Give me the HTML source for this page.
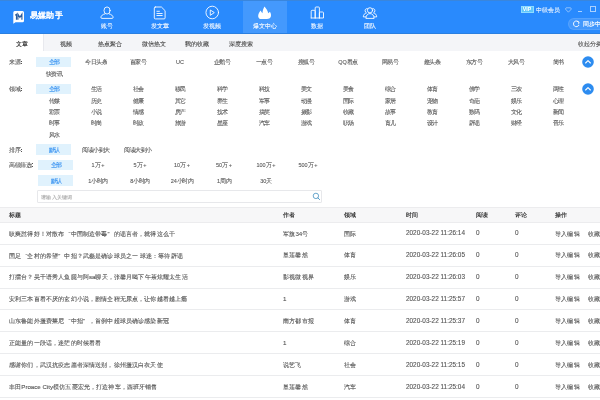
<!DOCTYPE html><html><head><meta charset="utf-8"><style>
html,body{margin:0;padding:0;width:600px;height:400px;overflow:hidden;background:#fff;font-family:"Liberation Sans",sans-serif;}
.t{position:absolute;white-space:nowrap;transform-origin:0 0;-webkit-text-stroke:0.45px currentColor;-webkit-font-smoothing:antialiased;}
.b{position:absolute;}
.ql{display:inline-block;width:1em;text-align:right}
.qr{display:inline-block;width:1em;text-align:left}
</style></head><body>
<div class="b" style="left:0;top:0;width:600px;height:34px;background:#298afd"></div>
<div class="b" style="left:243px;top:0;width:44px;height:34px;background:rgba(255,255,255,0.13)"></div>
<div class="b" style="left:0;top:0;width:600px;height:1px;background:#3a86dc"></div>
<div class="b" style="left:0;top:33px;width:600px;height:1px;background:#2a7fe0"></div>
<svg class="b" style="left:12px;top:10px" width="14" height="15" viewBox="0 0 14 15">
<path d="M2.7 1 H10.5 Q12 1 12 2.5 V10.7 Q12 12.2 10.5 12.2 H3.5 L1.3 13.8 V2.5 Q1.3 1 2.7 1 Z" fill="#fff"/>
<path d="M3.2 5.3 L4.5 4.3 V9.7 M5.9 9.7 V4.3 L7.9 7.4 L9.9 4.3 V9.7" stroke="#2b5d9e" stroke-width="1.15" fill="none" stroke-linejoin="miter"/>
</svg>
<div class="t" style="left:29.50px;top:9.44px;font-size:33px;line-height:52.80px;color:#fff;font-weight:bold;transform:scale(0.24848);-webkit-text-stroke:0;-webkit-text-stroke:0.4px #fff;">易媒助手</div>
<div class="t" style="left:87.00px;top:20.50px;width:160.0px;text-align:center;font-size:24px;line-height:38.40px;color:#fff;font-weight:normal;transform:scale(0.25000);-webkit-text-stroke:0.3px #fff;">账号</div>
<div class="t" style="left:139.50px;top:20.50px;width:160.0px;text-align:center;font-size:24px;line-height:38.40px;color:#fff;font-weight:normal;transform:scale(0.25000);-webkit-text-stroke:0.3px #fff;">发文章</div>
<div class="t" style="left:192.30px;top:20.50px;width:160.0px;text-align:center;font-size:24px;line-height:38.40px;color:#fff;font-weight:normal;transform:scale(0.25000);-webkit-text-stroke:0.3px #fff;">发视频</div>
<div class="t" style="left:244.80px;top:20.50px;width:160.0px;text-align:center;font-size:24px;line-height:38.40px;color:#fff;font-weight:normal;transform:scale(0.25000);-webkit-text-stroke:0.3px #fff;">爆文中心</div>
<div class="t" style="left:297.30px;top:20.50px;width:160.0px;text-align:center;font-size:24px;line-height:38.40px;color:#fff;font-weight:normal;transform:scale(0.25000);-webkit-text-stroke:0.3px #fff;">数据</div>
<div class="t" style="left:349.80px;top:20.50px;width:160.0px;text-align:center;font-size:24px;line-height:38.40px;color:#fff;font-weight:normal;transform:scale(0.25000);-webkit-text-stroke:0.3px #fff;">团队</div>
<svg class="b" style="left:98px;top:4px" width="20" height="18" viewBox="0 0 20 18">
<ellipse cx="9.05" cy="6.5" rx="3.05" ry="3.55" stroke="rgba(255,255,255,0.88)" stroke-width="1.0" fill="none" stroke-linecap="round" stroke-linejoin="round"/>
<path d="M6.9 9.9 C4.8 10.3 2.9 11.8 2.9 13.3 Q2.9 14.4 4 14.4 H14 Q15.1 14.4 15.1 13.3 C15.1 11.8 13.2 10.3 11.2 9.9" stroke="rgba(255,255,255,0.88)" stroke-width="1.0" fill="none" stroke-linecap="round" stroke-linejoin="round"/>
</svg>
<svg class="b" style="left:150px;top:4px" width="20" height="18" viewBox="0 0 20 18">
<path d="M5.3 3.0 H11.4 L15.1 6.7 V13.9 Q15.1 14.9 14.1 14.9 H5.3 Q4.3 14.9 4.3 13.9 V4 Q4.3 3 5.3 3 Z" stroke="rgba(255,255,255,0.88)" stroke-width="1.0" fill="none" stroke-linecap="round" stroke-linejoin="round"/>
<path d="M6.9 7.3 H9.4 M6.9 9.5 H12.2 M6.9 11.5 H12.2" stroke="rgba(255,255,255,0.88)" stroke-width="1.0" fill="none" stroke-linecap="round" stroke-linejoin="round"/>
</svg>
<svg class="b" style="left:202px;top:3px" width="20" height="20" viewBox="0 0 20 20">
<circle cx="10.25" cy="9.5" r="6.3" stroke="rgba(255,255,255,0.88)" stroke-width="1.0" fill="none" stroke-linecap="round" stroke-linejoin="round"/>
<path d="M8.6 7.2 L12.3 9.6 L8.6 12.1 Z" stroke="rgba(255,255,255,0.88)" stroke-width="1.0" fill="none" stroke-linecap="round" stroke-linejoin="round"/>
</svg>
<svg class="b" style="left:254px;top:3px" width="20" height="20" viewBox="0 0 20 20">
<path d="M10.5 3.6 C12 5.5 13.8 7.6 14.2 10.2 C14.8 9.6 15.4 9.2 15.9 8.8 C17 10.5 17.3 12.4 16.8 13.8 C16.2 15.5 14.8 16 13 16 H7.5 C5.5 16 4.4 15 4.2 13.4 C4 11.6 5 9.2 6.6 7.4 C7 8.6 7.8 9.6 8.5 10.2 C8.6 7.8 9.4 5.4 10.5 3.6 Z" fill="#fff"/>
</svg>
<svg class="b" style="left:307px;top:3px" width="20" height="20" viewBox="0 0 20 20">
<path d="M4.2 15 V8.2 Q4.2 7.3 5.1 7.3 H7.3 Q8.2 7.3 8.2 8.2 V15 M8.2 15 V4.9 Q8.2 4 9.1 4 H11.5 Q12.4 4 12.4 4.9 V15 M12.4 15 V9.9 Q12.4 9 13.3 9 H15.6 Q16.5 9 16.5 9.9 V15 H4.2" stroke="rgba(255,255,255,0.88)" stroke-width="1.0" fill="none" stroke-linecap="round" stroke-linejoin="round"/>
</svg>
<svg class="b" style="left:360px;top:3px" width="20" height="20" viewBox="0 0 20 20">
<circle cx="10" cy="7.3" r="2.6" stroke="rgba(255,255,255,0.88)" stroke-width="1.0" fill="none" stroke-linecap="round" stroke-linejoin="round"/>
<path d="M5.9 15 C5.9 12.3 7.8 10.6 10 10.6 C12.2 10.6 14.1 12.3 14.1 15 Z" stroke="rgba(255,255,255,0.88)" stroke-width="1.0" fill="none" stroke-linecap="round" stroke-linejoin="round"/>
<path d="M7.3 5.6 C6.1 5.4 5.1 6.3 5.1 7.7 C5.1 8.8 5.7 9.6 6.5 9.9 C4.6 10.4 3.3 11.8 3.3 13.9 H5.9" stroke="rgba(255,255,255,0.88)" stroke-width="1.0" fill="none" stroke-linecap="round" stroke-linejoin="round"/>
<path d="M12.7 5.6 C13.9 5.4 14.9 6.3 14.9 7.7 C14.9 8.8 14.3 9.6 13.5 9.9 C15.4 10.4 16.7 11.8 16.7 13.9 H14.1" stroke="rgba(255,255,255,0.88)" stroke-width="1.0" fill="none" stroke-linecap="round" stroke-linejoin="round"/>
</svg>
<div class="b" style="left:520.6px;top:5.8px;width:13.6px;height:6.9px;background:#5ec6fc;box-sizing:border-box;border:0.5px solid #8fdcff"></div>
<div class="t" style="left:520.40px;top:5.14px;width:56.5px;text-align:center;font-size:21px;line-height:33.60px;color:#fff;font-weight:bold;transform:scale(0.24762);-webkit-text-stroke:0;">VIP</div>
<div class="t" style="left:536.00px;top:4.80px;font-size:24px;line-height:38.40px;color:rgba(255,255,255,0.92);font-weight:normal;transform:scale(0.25000);-webkit-text-stroke:0.3px rgba(255,255,255,0.9);">中级会员</div>
<svg class="b" style="left:565px;top:7px" width="7" height="6" viewBox="0 0 7 6"><path d="M1.2 0.8 H5.6 L6.4 2 L3.4 5.2 L0.4 2 Z" stroke="rgba(255,255,255,0.65)" stroke-width="0.7" fill="none" stroke-linejoin="round"/></svg>
<div class="b" style="left:578px;top:11.2px;width:4px;height:0.7px;background:rgba(255,255,255,0.6)"></div>
<div class="b" style="left:590px;top:6.1px;width:6px;height:5.8px;box-sizing:border-box;border:0.6px solid rgba(255,255,255,0.6)"></div>
<div class="b" style="left:568px;top:18px;width:50px;height:12px;border-radius:6px;background:rgba(255,255,255,0.12);box-sizing:border-box;border:0.6px solid rgba(255,255,255,0.1)"></div>
<svg class="b" style="left:572px;top:20px" width="9" height="8" viewBox="0 0 9 8"><path d="M6.7 2.1 A2.9 2.9 0 1 0 6.9 5.3" stroke="#fff" stroke-width="0.9" fill="none" stroke-linecap="round"/><path d="M5.2 1.3 L7.1 2.2 L6.6 3.9" stroke="#fff" stroke-width="0.8" fill="none" stroke-linecap="round" stroke-linejoin="round"/></svg>
<div class="t" style="left:583.00px;top:19.20px;font-size:24px;line-height:38.40px;color:#fff;font-weight:normal;transform:scale(0.25000);-webkit-text-stroke:0.5px #fff;">同步中...</div>
<div class="t" style="left:536.00px;top:4.80px;font-size:24px;line-height:38.40px;color:#fff;font-weight:normal;transform:scale(0.25000);"></div>
<div class="b" style="left:43px;top:34px;width:557px;height:17.2px;background:#f4f5f8"></div>
<div class="b" style="left:43px;top:34px;width:0.6px;height:17.2px;background:#e8e9ee"></div>
<div class="t" style="left:2.00px;top:38.62px;width:157.4px;text-align:center;font-size:24px;line-height:38.40px;color:#333;font-weight:bold;transform:scale(0.25417);-webkit-text-stroke:0;">文章</div>
<div class="t" style="left:46.00px;top:38.62px;width:157.4px;text-align:center;font-size:24px;line-height:38.40px;color:#484848;font-weight:normal;transform:scale(0.25417);">视频</div>
<div class="t" style="left:89.60px;top:38.62px;width:157.4px;text-align:center;font-size:24px;line-height:38.40px;color:#484848;font-weight:normal;transform:scale(0.25417);">热点聚合</div>
<div class="t" style="left:133.50px;top:38.62px;width:157.4px;text-align:center;font-size:24px;line-height:38.40px;color:#484848;font-weight:normal;transform:scale(0.25417);">微信热文</div>
<div class="t" style="left:177.20px;top:38.62px;width:157.4px;text-align:center;font-size:24px;line-height:38.40px;color:#484848;font-weight:normal;transform:scale(0.25417);">我的收藏</div>
<div class="t" style="left:221.20px;top:38.62px;width:157.4px;text-align:center;font-size:24px;line-height:38.40px;color:#484848;font-weight:normal;transform:scale(0.25417);">深度搜索</div>
<div class="t" style="left:578.00px;top:38.50px;font-size:24px;line-height:38.40px;color:#555;font-weight:normal;transform:scale(0.25000);">收起分类</div>
<div class="t" style="left:8.70px;top:57.90px;font-size:22px;line-height:35.20px;color:#606060;font-weight:normal;transform:scale(0.25000);">来源</div>
<div class="b" style="left:20.6px;top:60.70px;width:0.9px;height:0.9px;background:#555"></div>
<div class="b" style="left:20.6px;top:63.40px;width:0.9px;height:0.9px;background:#555"></div>
<div class="b" style="left:36px;top:57px;width:35.3px;height:10px;background:#e0f2fd"></div>
<div class="t" style="left:34.00px;top:58.10px;width:160.0px;text-align:center;font-size:22px;line-height:35.20px;color:#2d8cf0;font-weight:normal;transform:scale(0.25000);">全部</div>
<div class="t" style="left:76.00px;top:58.10px;width:160.0px;text-align:center;font-size:22px;line-height:35.20px;color:#5c5c5c;font-weight:normal;transform:scale(0.25000);">今日头条</div>
<div class="t" style="left:118.00px;top:58.10px;width:160.0px;text-align:center;font-size:22px;line-height:35.20px;color:#5c5c5c;font-weight:normal;transform:scale(0.25000);">百家号</div>
<div class="t" style="left:160.00px;top:58.10px;width:160.0px;text-align:center;font-size:22px;line-height:35.20px;color:#5c5c5c;font-weight:normal;transform:scale(0.25000);">UC</div>
<div class="t" style="left:202.00px;top:58.10px;width:160.0px;text-align:center;font-size:22px;line-height:35.20px;color:#5c5c5c;font-weight:normal;transform:scale(0.25000);">企鹅号</div>
<div class="t" style="left:244.00px;top:58.10px;width:160.0px;text-align:center;font-size:22px;line-height:35.20px;color:#5c5c5c;font-weight:normal;transform:scale(0.25000);">一点号</div>
<div class="t" style="left:286.00px;top:58.10px;width:160.0px;text-align:center;font-size:22px;line-height:35.20px;color:#5c5c5c;font-weight:normal;transform:scale(0.25000);">搜狐号</div>
<div class="t" style="left:328.00px;top:58.10px;width:160.0px;text-align:center;font-size:22px;line-height:35.20px;color:#5c5c5c;font-weight:normal;transform:scale(0.25000);">QQ看点</div>
<div class="t" style="left:370.00px;top:58.10px;width:160.0px;text-align:center;font-size:22px;line-height:35.20px;color:#5c5c5c;font-weight:normal;transform:scale(0.25000);">网易号</div>
<div class="t" style="left:412.00px;top:58.10px;width:160.0px;text-align:center;font-size:22px;line-height:35.20px;color:#5c5c5c;font-weight:normal;transform:scale(0.25000);">趣头条</div>
<div class="t" style="left:454.00px;top:58.10px;width:160.0px;text-align:center;font-size:22px;line-height:35.20px;color:#5c5c5c;font-weight:normal;transform:scale(0.25000);">东方号</div>
<div class="t" style="left:496.00px;top:58.10px;width:160.0px;text-align:center;font-size:22px;line-height:35.20px;color:#5c5c5c;font-weight:normal;transform:scale(0.25000);">大风号</div>
<div class="t" style="left:538.00px;top:58.10px;width:160.0px;text-align:center;font-size:22px;line-height:35.20px;color:#5c5c5c;font-weight:normal;transform:scale(0.25000);">简书</div>
<div class="t" style="left:34.00px;top:69.50px;width:160.0px;text-align:center;font-size:22px;line-height:35.20px;color:#5c5c5c;font-weight:normal;transform:scale(0.25000);">快资讯</div>
<svg class="b" style="left:581.5px;top:56px" width="12" height="12" viewBox="0 0 12 12"><circle cx="6" cy="6" r="5.8" fill="#2d8cf0"/><path d="M3.6 7 L6 4.6 L8.4 7" stroke="#fff" stroke-width="1.1" fill="none" stroke-linecap="round" stroke-linejoin="round"/></svg>
<div class="t" style="left:8.70px;top:84.90px;font-size:22px;line-height:35.20px;color:#606060;font-weight:normal;transform:scale(0.25000);">领域</div>
<div class="b" style="left:20.6px;top:87.70px;width:0.9px;height:0.9px;background:#555"></div>
<div class="b" style="left:20.6px;top:90.40px;width:0.9px;height:0.9px;background:#555"></div>
<div class="b" style="left:36px;top:83.5px;width:35.3px;height:10.6px;background:#e0f2fd"></div>
<div class="t" style="left:34.00px;top:85.10px;width:160.0px;text-align:center;font-size:22px;line-height:35.20px;color:#2d8cf0;font-weight:normal;transform:scale(0.25000);">全部</div>
<div class="t" style="left:76.00px;top:85.10px;width:160.0px;text-align:center;font-size:22px;line-height:35.20px;color:#5c5c5c;font-weight:normal;transform:scale(0.25000);">生活</div>
<div class="t" style="left:118.00px;top:85.10px;width:160.0px;text-align:center;font-size:22px;line-height:35.20px;color:#5c5c5c;font-weight:normal;transform:scale(0.25000);">社会</div>
<div class="t" style="left:160.00px;top:85.10px;width:160.0px;text-align:center;font-size:22px;line-height:35.20px;color:#5c5c5c;font-weight:normal;transform:scale(0.25000);">移民</div>
<div class="t" style="left:202.00px;top:85.10px;width:160.0px;text-align:center;font-size:22px;line-height:35.20px;color:#5c5c5c;font-weight:normal;transform:scale(0.25000);">科学</div>
<div class="t" style="left:244.00px;top:85.10px;width:160.0px;text-align:center;font-size:22px;line-height:35.20px;color:#5c5c5c;font-weight:normal;transform:scale(0.25000);">科技</div>
<div class="t" style="left:286.00px;top:85.10px;width:160.0px;text-align:center;font-size:22px;line-height:35.20px;color:#5c5c5c;font-weight:normal;transform:scale(0.25000);">美文</div>
<div class="t" style="left:328.00px;top:85.10px;width:160.0px;text-align:center;font-size:22px;line-height:35.20px;color:#5c5c5c;font-weight:normal;transform:scale(0.25000);">美食</div>
<div class="t" style="left:370.00px;top:85.10px;width:160.0px;text-align:center;font-size:22px;line-height:35.20px;color:#5c5c5c;font-weight:normal;transform:scale(0.25000);">综合</div>
<div class="t" style="left:412.00px;top:85.10px;width:160.0px;text-align:center;font-size:22px;line-height:35.20px;color:#5c5c5c;font-weight:normal;transform:scale(0.25000);">体育</div>
<div class="t" style="left:454.00px;top:85.10px;width:160.0px;text-align:center;font-size:22px;line-height:35.20px;color:#5c5c5c;font-weight:normal;transform:scale(0.25000);">佛学</div>
<div class="t" style="left:496.00px;top:85.10px;width:160.0px;text-align:center;font-size:22px;line-height:35.20px;color:#5c5c5c;font-weight:normal;transform:scale(0.25000);">三农</div>
<div class="t" style="left:538.00px;top:85.10px;width:160.0px;text-align:center;font-size:22px;line-height:35.20px;color:#5c5c5c;font-weight:normal;transform:scale(0.25000);">两性</div>
<div class="t" style="left:34.00px;top:96.50px;width:160.0px;text-align:center;font-size:22px;line-height:35.20px;color:#5c5c5c;font-weight:normal;transform:scale(0.25000);">传媒</div>
<div class="t" style="left:76.00px;top:96.50px;width:160.0px;text-align:center;font-size:22px;line-height:35.20px;color:#5c5c5c;font-weight:normal;transform:scale(0.25000);">历史</div>
<div class="t" style="left:118.00px;top:96.50px;width:160.0px;text-align:center;font-size:22px;line-height:35.20px;color:#5c5c5c;font-weight:normal;transform:scale(0.25000);">健康</div>
<div class="t" style="left:160.00px;top:96.50px;width:160.0px;text-align:center;font-size:22px;line-height:35.20px;color:#5c5c5c;font-weight:normal;transform:scale(0.25000);">其它</div>
<div class="t" style="left:202.00px;top:96.50px;width:160.0px;text-align:center;font-size:22px;line-height:35.20px;color:#5c5c5c;font-weight:normal;transform:scale(0.25000);">养生</div>
<div class="t" style="left:244.00px;top:96.50px;width:160.0px;text-align:center;font-size:22px;line-height:35.20px;color:#5c5c5c;font-weight:normal;transform:scale(0.25000);">军事</div>
<div class="t" style="left:286.00px;top:96.50px;width:160.0px;text-align:center;font-size:22px;line-height:35.20px;color:#5c5c5c;font-weight:normal;transform:scale(0.25000);">动漫</div>
<div class="t" style="left:328.00px;top:96.50px;width:160.0px;text-align:center;font-size:22px;line-height:35.20px;color:#5c5c5c;font-weight:normal;transform:scale(0.25000);">国际</div>
<div class="t" style="left:370.00px;top:96.50px;width:160.0px;text-align:center;font-size:22px;line-height:35.20px;color:#5c5c5c;font-weight:normal;transform:scale(0.25000);">家居</div>
<div class="t" style="left:412.00px;top:96.50px;width:160.0px;text-align:center;font-size:22px;line-height:35.20px;color:#5c5c5c;font-weight:normal;transform:scale(0.25000);">宠物</div>
<div class="t" style="left:454.00px;top:96.50px;width:160.0px;text-align:center;font-size:22px;line-height:35.20px;color:#5c5c5c;font-weight:normal;transform:scale(0.25000);">奇葩</div>
<div class="t" style="left:496.00px;top:96.50px;width:160.0px;text-align:center;font-size:22px;line-height:35.20px;color:#5c5c5c;font-weight:normal;transform:scale(0.25000);">娱乐</div>
<div class="t" style="left:538.00px;top:96.50px;width:160.0px;text-align:center;font-size:22px;line-height:35.20px;color:#5c5c5c;font-weight:normal;transform:scale(0.25000);">心理</div>
<div class="t" style="left:34.00px;top:107.90px;width:160.0px;text-align:center;font-size:22px;line-height:35.20px;color:#5c5c5c;font-weight:normal;transform:scale(0.25000);">彩票</div>
<div class="t" style="left:76.00px;top:107.90px;width:160.0px;text-align:center;font-size:22px;line-height:35.20px;color:#5c5c5c;font-weight:normal;transform:scale(0.25000);">小说</div>
<div class="t" style="left:118.00px;top:107.90px;width:160.0px;text-align:center;font-size:22px;line-height:35.20px;color:#5c5c5c;font-weight:normal;transform:scale(0.25000);">情感</div>
<div class="t" style="left:160.00px;top:107.90px;width:160.0px;text-align:center;font-size:22px;line-height:35.20px;color:#5c5c5c;font-weight:normal;transform:scale(0.25000);">房产</div>
<div class="t" style="left:202.00px;top:107.90px;width:160.0px;text-align:center;font-size:22px;line-height:35.20px;color:#5c5c5c;font-weight:normal;transform:scale(0.25000);">技术</div>
<div class="t" style="left:244.00px;top:107.90px;width:160.0px;text-align:center;font-size:22px;line-height:35.20px;color:#5c5c5c;font-weight:normal;transform:scale(0.25000);">搞笑</div>
<div class="t" style="left:286.00px;top:107.90px;width:160.0px;text-align:center;font-size:22px;line-height:35.20px;color:#5c5c5c;font-weight:normal;transform:scale(0.25000);">摄影</div>
<div class="t" style="left:328.00px;top:107.90px;width:160.0px;text-align:center;font-size:22px;line-height:35.20px;color:#5c5c5c;font-weight:normal;transform:scale(0.25000);">收藏</div>
<div class="t" style="left:370.00px;top:107.90px;width:160.0px;text-align:center;font-size:22px;line-height:35.20px;color:#5c5c5c;font-weight:normal;transform:scale(0.25000);">故事</div>
<div class="t" style="left:412.00px;top:107.90px;width:160.0px;text-align:center;font-size:22px;line-height:35.20px;color:#5c5c5c;font-weight:normal;transform:scale(0.25000);">教育</div>
<div class="t" style="left:454.00px;top:107.90px;width:160.0px;text-align:center;font-size:22px;line-height:35.20px;color:#5c5c5c;font-weight:normal;transform:scale(0.25000);">数码</div>
<div class="t" style="left:496.00px;top:107.90px;width:160.0px;text-align:center;font-size:22px;line-height:35.20px;color:#5c5c5c;font-weight:normal;transform:scale(0.25000);">文化</div>
<div class="t" style="left:538.00px;top:107.90px;width:160.0px;text-align:center;font-size:22px;line-height:35.20px;color:#5c5c5c;font-weight:normal;transform:scale(0.25000);">新闻</div>
<div class="t" style="left:34.00px;top:119.30px;width:160.0px;text-align:center;font-size:22px;line-height:35.20px;color:#5c5c5c;font-weight:normal;transform:scale(0.25000);">时事</div>
<div class="t" style="left:76.00px;top:119.30px;width:160.0px;text-align:center;font-size:22px;line-height:35.20px;color:#5c5c5c;font-weight:normal;transform:scale(0.25000);">时尚</div>
<div class="t" style="left:118.00px;top:119.30px;width:160.0px;text-align:center;font-size:22px;line-height:35.20px;color:#5c5c5c;font-weight:normal;transform:scale(0.25000);">时政</div>
<div class="t" style="left:160.00px;top:119.30px;width:160.0px;text-align:center;font-size:22px;line-height:35.20px;color:#5c5c5c;font-weight:normal;transform:scale(0.25000);">旅游</div>
<div class="t" style="left:202.00px;top:119.30px;width:160.0px;text-align:center;font-size:22px;line-height:35.20px;color:#5c5c5c;font-weight:normal;transform:scale(0.25000);">星座</div>
<div class="t" style="left:244.00px;top:119.30px;width:160.0px;text-align:center;font-size:22px;line-height:35.20px;color:#5c5c5c;font-weight:normal;transform:scale(0.25000);">汽车</div>
<div class="t" style="left:286.00px;top:119.30px;width:160.0px;text-align:center;font-size:22px;line-height:35.20px;color:#5c5c5c;font-weight:normal;transform:scale(0.25000);">游戏</div>
<div class="t" style="left:328.00px;top:119.30px;width:160.0px;text-align:center;font-size:22px;line-height:35.20px;color:#5c5c5c;font-weight:normal;transform:scale(0.25000);">职场</div>
<div class="t" style="left:370.00px;top:119.30px;width:160.0px;text-align:center;font-size:22px;line-height:35.20px;color:#5c5c5c;font-weight:normal;transform:scale(0.25000);">育儿</div>
<div class="t" style="left:412.00px;top:119.30px;width:160.0px;text-align:center;font-size:22px;line-height:35.20px;color:#5c5c5c;font-weight:normal;transform:scale(0.25000);">设计</div>
<div class="t" style="left:454.00px;top:119.30px;width:160.0px;text-align:center;font-size:22px;line-height:35.20px;color:#5c5c5c;font-weight:normal;transform:scale(0.25000);">辟谣</div>
<div class="t" style="left:496.00px;top:119.30px;width:160.0px;text-align:center;font-size:22px;line-height:35.20px;color:#5c5c5c;font-weight:normal;transform:scale(0.25000);">财经</div>
<div class="t" style="left:538.00px;top:119.30px;width:160.0px;text-align:center;font-size:22px;line-height:35.20px;color:#5c5c5c;font-weight:normal;transform:scale(0.25000);">音乐</div>
<div class="t" style="left:34.00px;top:130.70px;width:160.0px;text-align:center;font-size:22px;line-height:35.20px;color:#5c5c5c;font-weight:normal;transform:scale(0.25000);">风水</div>
<svg class="b" style="left:581.5px;top:82.8px" width="12" height="12" viewBox="0 0 12 12"><circle cx="6" cy="6" r="5.8" fill="#2d8cf0"/><path d="M3.6 7 L6 4.6 L8.4 7" stroke="#fff" stroke-width="1.1" fill="none" stroke-linecap="round" stroke-linejoin="round"/></svg>
<div class="t" style="left:8.70px;top:145.80px;font-size:22px;line-height:35.20px;color:#606060;font-weight:normal;transform:scale(0.25000);">排序</div>
<div class="b" style="left:20.6px;top:148.60px;width:0.9px;height:0.9px;background:#555"></div>
<div class="b" style="left:20.6px;top:151.30px;width:0.9px;height:0.9px;background:#555"></div>
<div class="b" style="left:36.2px;top:143.8px;width:35px;height:11px;background:#e0f2fd"></div>
<div class="t" style="left:34.00px;top:145.90px;width:160.0px;text-align:center;font-size:22px;line-height:35.20px;color:#2d8cf0;font-weight:normal;transform:scale(0.25000);">默认</div>
<div class="t" style="left:76.00px;top:145.90px;width:160.0px;text-align:center;font-size:22px;line-height:35.20px;color:#5c5c5c;font-weight:normal;transform:scale(0.25000);">阅读小到大</div>
<div class="t" style="left:118.00px;top:145.90px;width:160.0px;text-align:center;font-size:22px;line-height:35.20px;color:#5c5c5c;font-weight:normal;transform:scale(0.25000);">阅读大到小</div>
<div class="t" style="left:8.70px;top:160.60px;font-size:22px;line-height:35.20px;color:#606060;font-weight:normal;transform:scale(0.25000);">高级筛选</div>
<div class="b" style="left:31.8px;top:163.40px;width:0.9px;height:0.9px;background:#555"></div>
<div class="b" style="left:31.8px;top:166.10px;width:0.9px;height:0.9px;background:#555"></div>
<div class="b" style="left:37.7px;top:159.5px;width:35px;height:10.6px;background:#e0f2fd"></div>
<div class="t" style="left:35.50px;top:160.60px;width:160.0px;text-align:center;font-size:22px;line-height:35.20px;color:#2d8cf0;font-weight:normal;transform:scale(0.25000);">全部</div>
<div class="t" style="left:77.50px;top:160.60px;width:160.0px;text-align:center;font-size:22px;line-height:35.20px;color:#5c5c5c;font-weight:normal;transform:scale(0.25000);">1万&thinsp;+</div>
<div class="t" style="left:119.50px;top:160.60px;width:160.0px;text-align:center;font-size:22px;line-height:35.20px;color:#5c5c5c;font-weight:normal;transform:scale(0.25000);">5万&thinsp;+</div>
<div class="t" style="left:161.50px;top:160.60px;width:160.0px;text-align:center;font-size:22px;line-height:35.20px;color:#5c5c5c;font-weight:normal;transform:scale(0.25000);">10万&thinsp;+</div>
<div class="t" style="left:203.50px;top:160.60px;width:160.0px;text-align:center;font-size:22px;line-height:35.20px;color:#5c5c5c;font-weight:normal;transform:scale(0.25000);">50万&thinsp;+</div>
<div class="t" style="left:245.50px;top:160.60px;width:160.0px;text-align:center;font-size:22px;line-height:35.20px;color:#5c5c5c;font-weight:normal;transform:scale(0.25000);">100万&thinsp;+</div>
<div class="t" style="left:287.50px;top:160.60px;width:160.0px;text-align:center;font-size:22px;line-height:35.20px;color:#5c5c5c;font-weight:normal;transform:scale(0.25000);">500万&thinsp;+</div>
<div class="b" style="left:37.7px;top:175px;width:35px;height:10.6px;background:#e0f2fd"></div>
<div class="t" style="left:35.50px;top:176.60px;width:160.0px;text-align:center;font-size:22px;line-height:35.20px;color:#2d8cf0;font-weight:normal;transform:scale(0.25000);">默认</div>
<div class="t" style="left:77.50px;top:176.60px;width:160.0px;text-align:center;font-size:22px;line-height:35.20px;color:#5c5c5c;font-weight:normal;transform:scale(0.25000);">1小时内</div>
<div class="t" style="left:119.50px;top:176.60px;width:160.0px;text-align:center;font-size:22px;line-height:35.20px;color:#5c5c5c;font-weight:normal;transform:scale(0.25000);">8小时内</div>
<div class="t" style="left:161.50px;top:176.60px;width:160.0px;text-align:center;font-size:22px;line-height:35.20px;color:#5c5c5c;font-weight:normal;transform:scale(0.25000);">24小时内</div>
<div class="t" style="left:203.50px;top:176.60px;width:160.0px;text-align:center;font-size:22px;line-height:35.20px;color:#5c5c5c;font-weight:normal;transform:scale(0.25000);">1周内</div>
<div class="t" style="left:245.50px;top:176.60px;width:160.0px;text-align:center;font-size:22px;line-height:35.20px;color:#5c5c5c;font-weight:normal;transform:scale(0.25000);">30天</div>
<div class="b" style="left:37.3px;top:189.6px;width:284.5px;height:13.8px;border:0.6px solid #e7e8eb;box-sizing:border-box;border-radius:1px"></div>
<div class="t" style="left:40.60px;top:193.16px;font-size:21px;line-height:33.60px;color:#aaa;font-weight:normal;transform:scale(0.25238);">请输入关键词</div>
<svg class="b" style="left:312px;top:192px" width="9" height="9" viewBox="0 0 9 9"><circle cx="3.9" cy="3.9" r="2.7" stroke="#4f97c4" stroke-width="0.85" fill="none"/><path d="M5.9 5.9 L7.6 7.6" stroke="#4f97c4" stroke-width="0.95" stroke-linecap="round"/></svg>
<div class="b" style="left:0;top:206.8px;width:600px;height:15.7px;background:#f7f7f8"></div>
<div class="b" style="left:0;top:206.8px;width:600px;height:1px;background:#ececee"></div>
<div class="b" style="left:0;top:221.6px;width:600px;height:1px;background:#ececee"></div>
<div class="t" style="left:8.80px;top:210.42px;font-size:24px;line-height:38.40px;color:#333;font-weight:bold;transform:scale(0.25417);-webkit-text-stroke:0;">标题</div>
<div class="t" style="left:282.50px;top:210.42px;font-size:24px;line-height:38.40px;color:#333;font-weight:bold;transform:scale(0.25417);-webkit-text-stroke:0;">作者</div>
<div class="t" style="left:344.30px;top:210.42px;font-size:24px;line-height:38.40px;color:#333;font-weight:bold;transform:scale(0.25417);-webkit-text-stroke:0;">领域</div>
<div class="t" style="left:405.50px;top:210.42px;font-size:24px;line-height:38.40px;color:#333;font-weight:bold;transform:scale(0.25417);-webkit-text-stroke:0;">时间</div>
<div class="t" style="left:475.80px;top:210.42px;font-size:24px;line-height:38.40px;color:#333;font-weight:bold;transform:scale(0.25417);-webkit-text-stroke:0;">阅读</div>
<div class="t" style="left:515.00px;top:210.42px;font-size:24px;line-height:38.40px;color:#333;font-weight:bold;transform:scale(0.25417);-webkit-text-stroke:0;">评论</div>
<div class="t" style="left:554.50px;top:210.42px;font-size:24px;line-height:38.40px;color:#333;font-weight:bold;transform:scale(0.25417);-webkit-text-stroke:0;">操作</div>
<div class="t" style="left:8.80px;top:228.58px;font-size:25px;line-height:40.00px;color:#555;font-weight:normal;transform:scale(0.24600);">耿爽怼得好！对散布<span class="ql">“</span>中国制造带毒<span class="qr">”</span>的谣言者，就得这么干</div>
<div class="t" style="left:282.50px;top:228.54px;font-size:25px;line-height:40.00px;color:#555;font-weight:normal;transform:scale(0.24800);">军旗34号</div>
<div class="t" style="left:344.30px;top:228.54px;font-size:25px;line-height:40.00px;color:#555;font-weight:normal;transform:scale(0.24800);">国际</div>
<div class="t" style="left:405.50px;top:228.38px;font-size:26px;line-height:41.60px;color:#555;font-weight:normal;transform:scale(0.24615);">2020-03-22 11:26:14</div>
<div class="t" style="left:475.80px;top:228.38px;font-size:26px;line-height:41.60px;color:#555;font-weight:normal;transform:scale(0.24615);">0</div>
<div class="t" style="left:515.00px;top:228.38px;font-size:26px;line-height:41.60px;color:#555;font-weight:normal;transform:scale(0.24615);">0</div>
<div class="t" style="left:554.50px;top:228.54px;font-size:25px;line-height:40.00px;color:#555;font-weight:normal;transform:scale(0.24800);">导入编辑</div>
<div class="t" style="left:588.00px;top:228.54px;font-size:25px;line-height:40.00px;color:#555;font-weight:normal;transform:scale(0.24800);">收藏</div>
<div class="b" style="left:0;top:243.60px;width:600px;height:1px;background:#ebecee"></div>
<div class="t" style="left:8.80px;top:250.53px;font-size:25px;line-height:40.00px;color:#555;font-weight:normal;transform:scale(0.24600);">国足<span class="ql">“</span>全村的希望<span class="qr">”</span>中招？武磊是确诊球员之一 球迷：等待辟谣</div>
<div class="t" style="left:282.50px;top:250.49px;font-size:25px;line-height:40.00px;color:#555;font-weight:normal;transform:scale(0.24800);">垦莲馨然</div>
<div class="t" style="left:344.30px;top:250.49px;font-size:25px;line-height:40.00px;color:#555;font-weight:normal;transform:scale(0.24800);">体育</div>
<div class="t" style="left:405.50px;top:250.33px;font-size:26px;line-height:41.60px;color:#555;font-weight:normal;transform:scale(0.24615);">2020-03-22 11:26:05</div>
<div class="t" style="left:475.80px;top:250.33px;font-size:26px;line-height:41.60px;color:#555;font-weight:normal;transform:scale(0.24615);">0</div>
<div class="t" style="left:515.00px;top:250.33px;font-size:26px;line-height:41.60px;color:#555;font-weight:normal;transform:scale(0.24615);">0</div>
<div class="t" style="left:554.50px;top:250.49px;font-size:25px;line-height:40.00px;color:#555;font-weight:normal;transform:scale(0.24800);">导入编辑</div>
<div class="t" style="left:588.00px;top:250.49px;font-size:25px;line-height:40.00px;color:#555;font-weight:normal;transform:scale(0.24800);">收藏</div>
<div class="b" style="left:0;top:265.55px;width:600px;height:1px;background:#ebecee"></div>
<div class="t" style="left:8.80px;top:272.48px;font-size:25px;line-height:40.00px;color:#555;font-weight:normal;transform:scale(0.24600);">打擂台？吴千语秀人鱼腿与阿sa聊天，张馨月喝下午茶炫耀太生活</div>
<div class="t" style="left:282.50px;top:272.44px;font-size:25px;line-height:40.00px;color:#555;font-weight:normal;transform:scale(0.24800);">影视微视界</div>
<div class="t" style="left:344.30px;top:272.44px;font-size:25px;line-height:40.00px;color:#555;font-weight:normal;transform:scale(0.24800);">娱乐</div>
<div class="t" style="left:405.50px;top:272.28px;font-size:26px;line-height:41.60px;color:#555;font-weight:normal;transform:scale(0.24615);">2020-03-22 11:26:03</div>
<div class="t" style="left:475.80px;top:272.28px;font-size:26px;line-height:41.60px;color:#555;font-weight:normal;transform:scale(0.24615);">0</div>
<div class="t" style="left:515.00px;top:272.28px;font-size:26px;line-height:41.60px;color:#555;font-weight:normal;transform:scale(0.24615);">0</div>
<div class="t" style="left:554.50px;top:272.44px;font-size:25px;line-height:40.00px;color:#555;font-weight:normal;transform:scale(0.24800);">导入编辑</div>
<div class="t" style="left:588.00px;top:272.44px;font-size:25px;line-height:40.00px;color:#555;font-weight:normal;transform:scale(0.24800);">收藏</div>
<div class="b" style="left:0;top:287.50px;width:600px;height:1px;background:#ebecee"></div>
<div class="t" style="left:8.80px;top:294.43px;font-size:25px;line-height:40.00px;color:#555;font-weight:normal;transform:scale(0.24600);">安利三本百看不厌的玄幻小说，剧情全程无尿点，让你越看越上瘾</div>
<div class="t" style="left:282.50px;top:294.39px;font-size:25px;line-height:40.00px;color:#555;font-weight:normal;transform:scale(0.24800);">1</div>
<div class="t" style="left:344.30px;top:294.39px;font-size:25px;line-height:40.00px;color:#555;font-weight:normal;transform:scale(0.24800);">游戏</div>
<div class="t" style="left:405.50px;top:294.23px;font-size:26px;line-height:41.60px;color:#555;font-weight:normal;transform:scale(0.24615);">2020-03-22 11:25:57</div>
<div class="t" style="left:475.80px;top:294.23px;font-size:26px;line-height:41.60px;color:#555;font-weight:normal;transform:scale(0.24615);">0</div>
<div class="t" style="left:515.00px;top:294.23px;font-size:26px;line-height:41.60px;color:#555;font-weight:normal;transform:scale(0.24615);">0</div>
<div class="t" style="left:554.50px;top:294.39px;font-size:25px;line-height:40.00px;color:#555;font-weight:normal;transform:scale(0.24800);">导入编辑</div>
<div class="t" style="left:588.00px;top:294.39px;font-size:25px;line-height:40.00px;color:#555;font-weight:normal;transform:scale(0.24800);">收藏</div>
<div class="b" style="left:0;top:309.45px;width:600px;height:1px;background:#ebecee"></div>
<div class="t" style="left:8.80px;top:316.38px;font-size:25px;line-height:40.00px;color:#555;font-weight:normal;transform:scale(0.24600);">山东鲁能外援费莱尼<span class="ql">“</span>中招<span class="qr">”</span>，首例中超球员确诊感染新冠</div>
<div class="t" style="left:282.50px;top:316.34px;font-size:25px;line-height:40.00px;color:#555;font-weight:normal;transform:scale(0.24800);">南方都市报</div>
<div class="t" style="left:344.30px;top:316.34px;font-size:25px;line-height:40.00px;color:#555;font-weight:normal;transform:scale(0.24800);">体育</div>
<div class="t" style="left:405.50px;top:316.18px;font-size:26px;line-height:41.60px;color:#555;font-weight:normal;transform:scale(0.24615);">2020-03-22 11:25:37</div>
<div class="t" style="left:475.80px;top:316.18px;font-size:26px;line-height:41.60px;color:#555;font-weight:normal;transform:scale(0.24615);">0</div>
<div class="t" style="left:515.00px;top:316.18px;font-size:26px;line-height:41.60px;color:#555;font-weight:normal;transform:scale(0.24615);">0</div>
<div class="t" style="left:554.50px;top:316.34px;font-size:25px;line-height:40.00px;color:#555;font-weight:normal;transform:scale(0.24800);">导入编辑</div>
<div class="t" style="left:588.00px;top:316.34px;font-size:25px;line-height:40.00px;color:#555;font-weight:normal;transform:scale(0.24800);">收藏</div>
<div class="b" style="left:0;top:331.40px;width:600px;height:1px;background:#ebecee"></div>
<div class="t" style="left:8.80px;top:338.33px;font-size:25px;line-height:40.00px;color:#555;font-weight:normal;transform:scale(0.24600);">正能量的一段话，迷茫的时候看看</div>
<div class="t" style="left:282.50px;top:338.29px;font-size:25px;line-height:40.00px;color:#555;font-weight:normal;transform:scale(0.24800);">1</div>
<div class="t" style="left:344.30px;top:338.29px;font-size:25px;line-height:40.00px;color:#555;font-weight:normal;transform:scale(0.24800);">综合</div>
<div class="t" style="left:405.50px;top:338.13px;font-size:26px;line-height:41.60px;color:#555;font-weight:normal;transform:scale(0.24615);">2020-03-22 11:25:19</div>
<div class="t" style="left:475.80px;top:338.13px;font-size:26px;line-height:41.60px;color:#555;font-weight:normal;transform:scale(0.24615);">0</div>
<div class="t" style="left:515.00px;top:338.13px;font-size:26px;line-height:41.60px;color:#555;font-weight:normal;transform:scale(0.24615);">0</div>
<div class="t" style="left:554.50px;top:338.29px;font-size:25px;line-height:40.00px;color:#555;font-weight:normal;transform:scale(0.24800);">导入编辑</div>
<div class="t" style="left:588.00px;top:338.29px;font-size:25px;line-height:40.00px;color:#555;font-weight:normal;transform:scale(0.24800);">收藏</div>
<div class="b" style="left:0;top:353.35px;width:600px;height:1px;background:#ebecee"></div>
<div class="t" style="left:8.80px;top:360.28px;font-size:25px;line-height:40.00px;color:#555;font-weight:normal;transform:scale(0.24600);">感谢你们，武汉抗疫志愿者深情送别，徐州援汉白衣天使</div>
<div class="t" style="left:282.50px;top:360.24px;font-size:25px;line-height:40.00px;color:#555;font-weight:normal;transform:scale(0.24800);">说艺飞</div>
<div class="t" style="left:344.30px;top:360.24px;font-size:25px;line-height:40.00px;color:#555;font-weight:normal;transform:scale(0.24800);">社会</div>
<div class="t" style="left:405.50px;top:360.08px;font-size:26px;line-height:41.60px;color:#555;font-weight:normal;transform:scale(0.24615);">2020-03-22 11:25:15</div>
<div class="t" style="left:475.80px;top:360.08px;font-size:26px;line-height:41.60px;color:#555;font-weight:normal;transform:scale(0.24615);">0</div>
<div class="t" style="left:515.00px;top:360.08px;font-size:26px;line-height:41.60px;color:#555;font-weight:normal;transform:scale(0.24615);">0</div>
<div class="t" style="left:554.50px;top:360.24px;font-size:25px;line-height:40.00px;color:#555;font-weight:normal;transform:scale(0.24800);">导入编辑</div>
<div class="t" style="left:588.00px;top:360.24px;font-size:25px;line-height:40.00px;color:#555;font-weight:normal;transform:scale(0.24800);">收藏</div>
<div class="b" style="left:0;top:375.30px;width:600px;height:1px;background:#ebecee"></div>
<div class="t" style="left:8.80px;top:382.23px;font-size:25px;line-height:40.00px;color:#555;font-weight:normal;transform:scale(0.24600);">丰田Proace City模仿五菱宏光，打造神车，西班牙销售</div>
<div class="t" style="left:282.50px;top:382.19px;font-size:25px;line-height:40.00px;color:#555;font-weight:normal;transform:scale(0.24800);">垦莲馨然</div>
<div class="t" style="left:344.30px;top:382.19px;font-size:25px;line-height:40.00px;color:#555;font-weight:normal;transform:scale(0.24800);">汽车</div>
<div class="t" style="left:405.50px;top:382.03px;font-size:26px;line-height:41.60px;color:#555;font-weight:normal;transform:scale(0.24615);">2020-03-22 11:25:04</div>
<div class="t" style="left:475.80px;top:382.03px;font-size:26px;line-height:41.60px;color:#555;font-weight:normal;transform:scale(0.24615);">0</div>
<div class="t" style="left:515.00px;top:382.03px;font-size:26px;line-height:41.60px;color:#555;font-weight:normal;transform:scale(0.24615);">0</div>
<div class="t" style="left:554.50px;top:382.19px;font-size:25px;line-height:40.00px;color:#555;font-weight:normal;transform:scale(0.24800);">导入编辑</div>
<div class="t" style="left:588.00px;top:382.19px;font-size:25px;line-height:40.00px;color:#555;font-weight:normal;transform:scale(0.24800);">收藏</div>
<div class="b" style="left:0;top:397.25px;width:600px;height:1px;background:#ebecee"></div>
<div style="position:absolute;top:0;left:0;width:1px;height:1px;filter:blur(0)"></div>
</body></html>
